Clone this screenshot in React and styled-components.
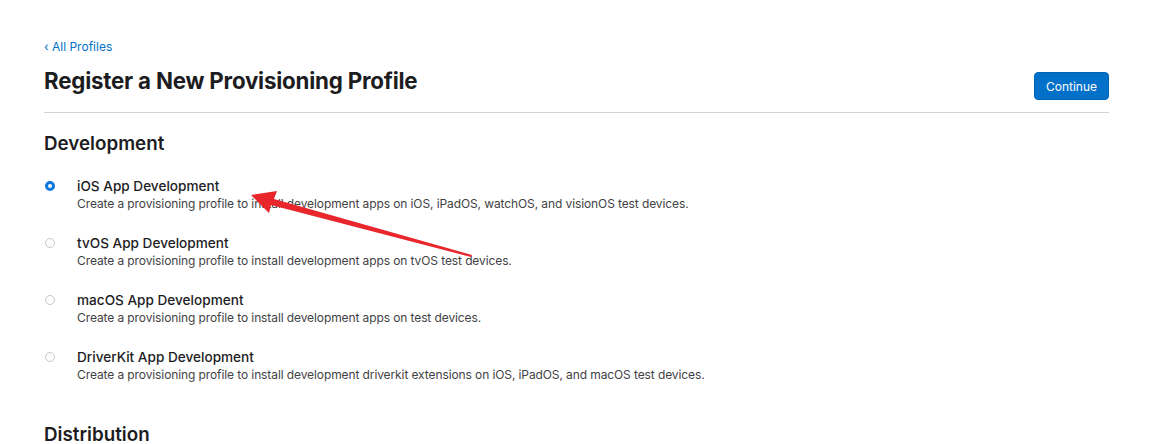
import React from "react";
import styled, { createGlobalStyle } from "styled-components";

const Global = createGlobalStyle`
  html, body { margin: 0; padding: 0; background: #fff; }
  body { font-family: Inter, "Noto Sans", sans-serif; color: #1d1d1f; -webkit-font-smoothing: antialiased; }
`;

const Page = styled.div`
  position: relative;
  width: 1172px;
  height: 444px;
  overflow: hidden;
  box-sizing: border-box;
  padding: 35px 63px 0 44px;
`;

const BackLink = styled.a`
  display: inline-flex;
  align-items: center;
  gap: 4px;
  font-size: 12px;
  color: #0070c9;
  text-decoration: none;
  line-height: 16px;
`;

const Header = styled.div`
  display: flex;
  align-items: flex-end;
  justify-content: space-between;
  padding: 11px 0 11px;
  border-bottom: 1px solid #d2d2d7;
`;

const Title = styled.h1`
  margin: 0 0 5px;
  font-size: 22.3px;
  font-weight: 700;
  letter-spacing: -0.2px;
  line-height: 30px;
  color: #1d1d1f;
`;

const Button = styled.button`
  background: #0070c9;
  color: #fff;
  border: 1px solid #0062b3;
  border-radius: 4px;
  font-family: inherit;
  font-size: 12px;
  height: 28px;
  padding: 0 11px;
  margin-bottom: 1px;
  cursor: pointer;
`;

const SectionTitle = styled.h2`
  margin: ${p => (p.$gap ? "40px" : "19px")} 0 21px;
  font-size: 18.8px;
  font-weight: 600;
  line-height: 24px;
  color: #1d1d1f;
`;

const List = styled.div`
  display: flex;
  flex-direction: column;
  gap: 22px;
`;

const Option = styled.label`
  display: grid;
  grid-template-columns: 33px 1fr;
  align-items: center;
`;

const Radio = styled.span`
  width: 10px;
  height: 10px;
  margin-left: 1px;
  box-sizing: border-box;
  border-radius: 50%;
  border: ${p => (p.$checked ? "3px solid #0a78e0" : "1px solid #c7c7cc")};
  background: #fff;
`;

const Label = styled.span`
  font-size: 13.6px;
  font-weight: 500;
  line-height: 18px;
  color: #1d1d1f;
`;

const Desc = styled.span`
  grid-column: 2;
  font-size: 12px;
  letter-spacing: -0.1px;
  line-height: 17px;
  color: #424245;
`;

const Arrow = styled.svg`
  position: absolute;
  left: 0;
  top: 0;
  pointer-events: none;
`;

const options = [
  { label: "iOS App Development", desc: "Create a provisioning profile to install development apps on iOS, iPadOS, watchOS, and visionOS test devices.", checked: true },
  { label: "tvOS App Development", desc: "Create a provisioning profile to install development apps on tvOS test devices." },
  { label: "macOS App Development", desc: "Create a provisioning profile to install development apps on test devices." },
  { label: "DriverKit App Development", desc: "Create a provisioning profile to install development driverkit extensions on iOS, iPadOS, and macOS test devices." },
];

export default function App() {
  return (
    <Page>
      <Global />
      <BackLink href="#">‹ All Profiles</BackLink>
      <Header>
        <Title>Register a New Provisioning Profile</Title>
        <Button>Continue</Button>
      </Header>
      <SectionTitle>Development</SectionTitle>
      <List>
        {options.map(o => (
          <Option key={o.label}>
            <Radio $checked={o.checked} />
            <Label>{o.label}</Label>
            <Desc>{o.desc}</Desc>
          </Option>
        ))}
      </List>
      <SectionTitle $gap>Distribution</SectionTitle>
      <Arrow width="1172" height="444" viewBox="0 0 1172 444">
        <polygon points="251,195 277,191 274,199 472,255 471,257 271,205 269,213" fill="#e8262b" />
      </Arrow>
    </Page>
  );
}
